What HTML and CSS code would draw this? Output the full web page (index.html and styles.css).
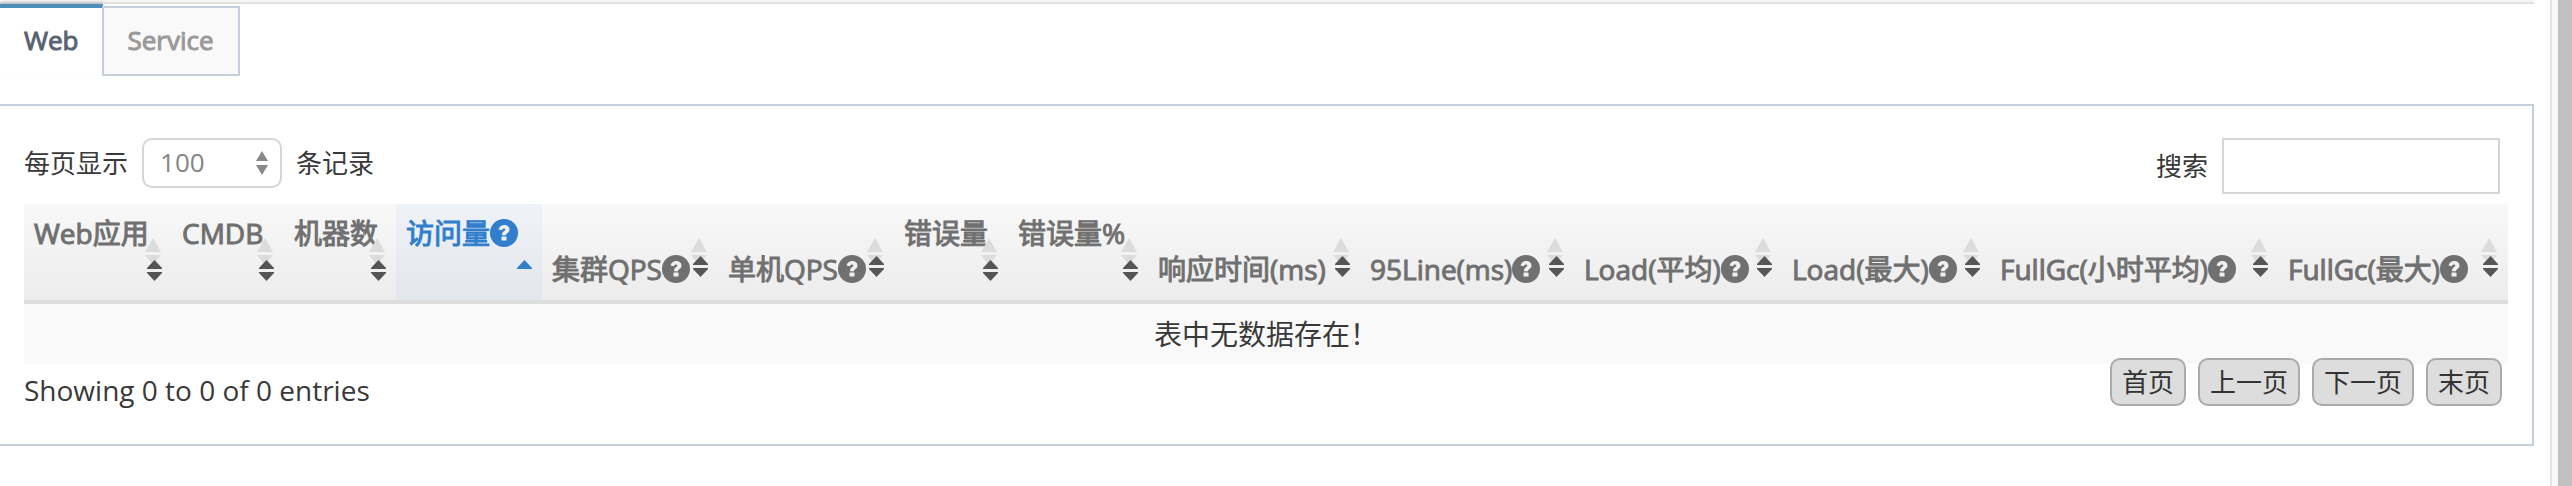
FILE: index.html
```html
<!DOCTYPE html>
<html lang="zh-CN">
<head>
<meta charset="utf-8">
<title>Web</title>
<link rel="stylesheet" href="styles.css">
</head>
<body>
<svg class="defs" aria-hidden="true">
  <symbol id="help" viewBox="0 0 28 28">
    <circle cx="14" cy="14" r="14" fill="currentColor"/>
    <path d="M8.500 10.600C9.300 7.600 11.400 6 14.200 6c3.100 0 5.300 1.900 5.300 4.500 0 2.200-1.300 3.100-2.500 3.900-.8.500-1 .9-1 1.800h-4c0-2.400.9-3.300 2.200-4.200.8-.5 1.100-.8 1.100-1.400 0-.7-.6-1.100-1.300-1.100-1 0-1.500.5-2.200 1.800z" fill="#f0f0f0"/>
    <rect x="11.500" y="17.600" width="5" height="4" rx=".6" fill="#f0f0f0"/>
  </symbol>
  <symbol id="sort-high" viewBox="0 0 18 44">
    <path d="M8 0l8 14H0zM0 17h16l-8 10z" fill="#dcdcdc"/>
    <path d="M9.500 22l7.500 8v1H2v-1zM2 34h15v1L9.500 43 2 35z" fill="#555"/>
  </symbol>
  <symbol id="sort-low" viewBox="0 0 18 44">
    <path d="M8 0l8 14H0zM0 17h16l-8 10z" fill="#dcdcdc"/>
    <path d="M9.500 18l7.500 8v1H2v-1zM2 30h15v1L9.500 39 2 31z" fill="#555"/>
  </symbol>
  <symbol id="sort-asc" viewBox="0 0 18 44">
    <path d="M9.500 22l7.500 8v1H2v-1z" fill="#307ecc"/>
  </symbol>
</svg>
<div class="page">
  <main class="content">
    <div class="tabs" role="tablist">
      <button class="tab active" role="tab" aria-selected="true">Web</button>
      <button class="tab" role="tab" aria-selected="false">Service</button>
    </div>
    <section class="panel">
      <div class="toolbar">
        <label class="length">每页显示
          <span class="select-box">
            <select><option>100</option></select>
            <svg class="select-arrows" viewBox="0 0 12 24"><path d="M6 0l6 10H0zM0 14h12L6 24z" fill="#888"/></svg>
          </span>
          条记录</label>
        <label class="search">搜索<input type="text"></label>
      </div>
      <table class="grid">
        <colgroup>
          <col class="w148"><col class="w112"><col class="w112"><col class="w146"><col class="w176"><col class="w176"><col class="w114"><col class="w140"><col class="w212"><col class="w214"><col class="w208"><col class="w208"><col class="w288"><col class="w230">
        </colgroup>
        <thead>
          <tr>
            <th>Web应用<svg class="sort"><use href="#sort-high"/></svg></th>
            <th>CMDB<svg class="sort"><use href="#sort-high"/></svg></th>
            <th>机器数<svg class="sort"><use href="#sort-high"/></svg></th>
            <th class="sorted">访问量<svg class="help"><use href="#help"/></svg><svg class="sort"><use href="#sort-asc"/></svg></th>
            <th class="low">集群QPS<svg class="help"><use href="#help"/></svg><svg class="sort"><use href="#sort-low"/></svg></th>
            <th class="low">单机QPS<svg class="help"><use href="#help"/></svg><svg class="sort"><use href="#sort-low"/></svg></th>
            <th>错误量<svg class="sort"><use href="#sort-high"/></svg></th>
            <th>错误量%<svg class="sort"><use href="#sort-high"/></svg></th>
            <th class="low">响应时间(ms)<svg class="sort"><use href="#sort-low"/></svg></th>
            <th class="low">95Line(ms)<svg class="help"><use href="#help"/></svg><svg class="sort"><use href="#sort-low"/></svg></th>
            <th class="low">Load(平均)<svg class="help"><use href="#help"/></svg><svg class="sort"><use href="#sort-low"/></svg></th>
            <th class="low">Load(最大)<svg class="help"><use href="#help"/></svg><svg class="sort"><use href="#sort-low"/></svg></th>
            <th class="low">FullGc(小时平均)<svg class="help"><use href="#help"/></svg><svg class="sort"><use href="#sort-low"/></svg></th>
            <th class="low">FullGc(最大)<svg class="help"><use href="#help"/></svg><svg class="sort"><use href="#sort-low"/></svg></th>
          </tr>
        </thead>
        <tbody>
          <tr><td colspan="14">表中无数据存在！</td></tr>
        </tbody>
      </table>
      <div class="footer">
        <div class="info">Showing 0 to 0 of 0 entries</div>
        <div class="pager">
          <button>首页</button>
          <button>上一页</button>
          <button>下一页</button>
          <button>末页</button>
        </div>
      </div>
    </section>
  </main>
  <div class="gutter"></div>
  <div class="scrollbar"></div>
</div>
</body>
</html>
```
FILE: styles.css
```css
* { box-sizing: border-box; }

body {
  margin: 0;
  background: #fff;
  color: #393939;
  font: 26px/36px "Open Sans", "Noto Sans CJK SC", sans-serif;
}

button, input, select { font: inherit; }

.defs { position: absolute; width: 0; height: 0; }

.page { display: flex; min-height: 100vh; }
.content { flex: 1; min-width: 0; margin-right: 16px; }
.gutter { width: 8px; background: #f8f8f8; border-left: 2px solid #e4e4e4; }
.scrollbar { width: 14px; background: #c1c1c1; }

.tabs {
  display: flex;
  align-items: flex-start;
  height: 104px;
  border-top: 2px solid #f5f5f5;
  box-shadow: inset 0 2px #e2e2e2;
}
.tab {
  height: 70px;
  margin: 4px 0 0 -1px;
  padding: 0 24px 2px;
  border: 2px solid #c5d0dc;
  background: #f9f9f9;
  color: #999;
  -webkit-text-stroke: 1px;
}
.tab.active {
  height: 74px;
  margin: 2px 0 0;
  padding-bottom: 6px;
  border: 0;
  border-top: 4px solid #4c8fbd;
  background: #fff;
  color: #576373;
  box-shadow: 0 -2px 3px rgba(0, 0, 0, .15);
}

.panel {
  padding: 32px 24px 36px;
  border: 2px solid #c5d0dc;
  border-left: 0;
}

.toolbar {
  display: flex;
  justify-content: space-between;
  align-items: flex-start;
  height: 66px;
  padding-right: 8px;
}
.length, .search { display: flex; align-items: center; gap: 14px; }
.select-box { position: relative; }
.select-box select {
  display: block;
  width: 140px;
  height: 50px;
  padding: 0 16px 2px;
  appearance: none;
  border: 2px solid #d5d5d5;
  border-radius: 10px;
  background: #fff;
  color: #858585;
}
.select-arrows {
  position: absolute;
  top: 13px;
  right: 14px;
  width: 12px;
  height: 24px;
  pointer-events: none;
}
.search input {
  width: 278px;
  height: 56px;
  padding: 0 10px;
  border: 2px solid #d5d5d5;
  background: #fff;
  color: #858585;
}

.grid {
  width: 100%;
  table-layout: fixed;
  border-collapse: separate;
  border-spacing: 0;
  font-size: 28px;
}
.grid thead tr { background: linear-gradient(#f8f8f8, #ececec); }
.grid th {
  position: relative;
  height: 100px;
  padding: 11px 0 0 10px;
  border-bottom: 4px solid #ddd;
  color: #707070;
  font-weight: 400;
  text-align: left;
  vertical-align: top;
  white-space: nowrap;
  -webkit-text-stroke: 1px;
}
.grid th.low { padding-top: 47px; }
.grid th.sorted {
  background: linear-gradient(#eff3f8, #e3e7ed);
  color: #307ecc;
}
.grid td {
  height: 60px;
  padding: 0;
  background: #f9f9f9;
  text-align: center;
}
.help { width: 28px; height: 28px; vertical-align: -3px; }
.sort { position: absolute; top: 34px; right: 9px; width: 18px; height: 44px; }
.help, .sort { -webkit-text-stroke: 0; }

.w112 { width: 112px; }
.w114 { width: 114px; }
.w140 { width: 140px; }
.w146 { width: 146px; }
.w148 { width: 148px; }
.w176 { width: 176px; }
.w208 { width: 208px; }
.w212 { width: 212px; }
.w214 { width: 214px; }
.w230 { width: 230px; }
.w288 { width: 288px; }

.footer { display: flex; justify-content: space-between; align-items: flex-start; }
.info { padding-top: 8px; font-size: 28px; }
.pager { display: flex; gap: 12px; margin-top: -6px; padding-right: 6px; }
.pager button {
  height: 48px;
  padding: 0 10px;
  border: 2px solid #aaa;
  border-radius: 10px;
  background: #ddd;
  color: #333;
}
```
